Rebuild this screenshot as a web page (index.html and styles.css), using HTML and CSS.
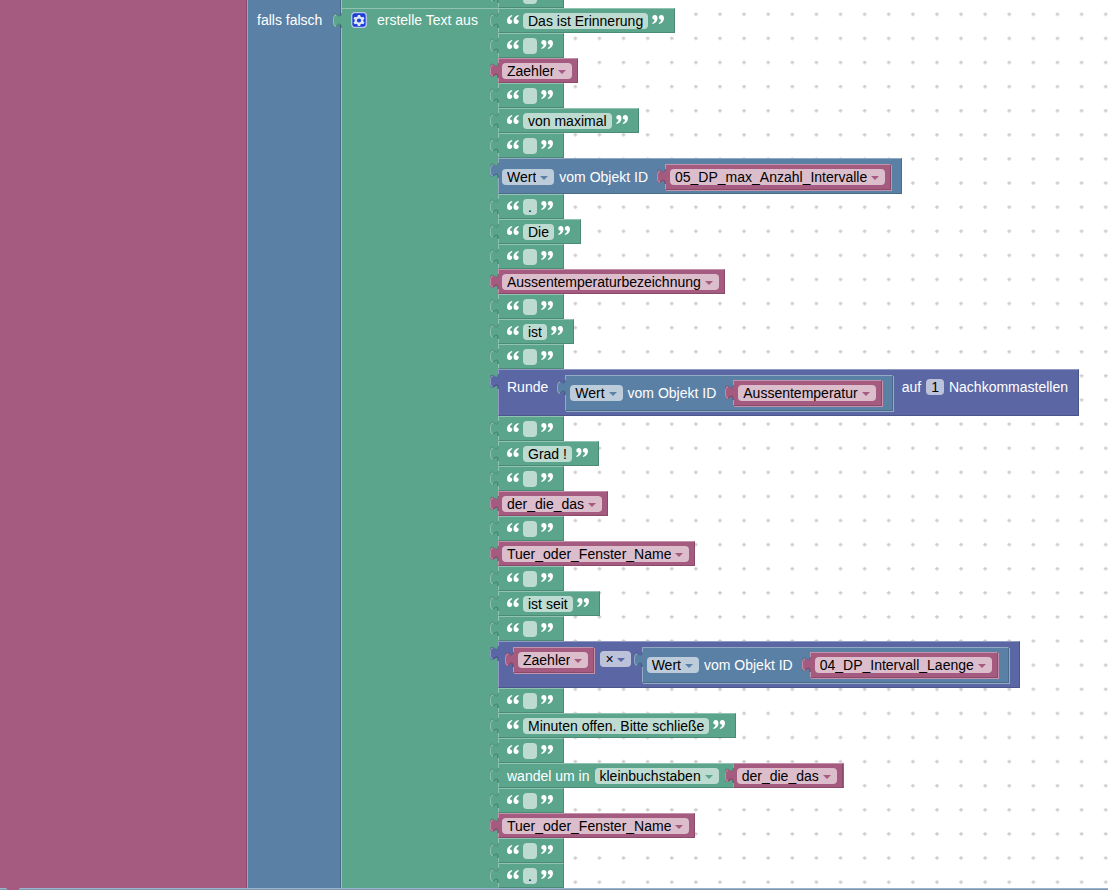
FILE: index.html
```html
<!DOCTYPE html>
<html lang="de">
<head>
<meta charset="utf-8">
<title>Blockly</title>
<link rel="stylesheet" href="styles.css">
</head>
<body>
<svg class="grid" aria-hidden="true">
  <defs>
    <pattern id="dots" width="25" height="25" patternUnits="userSpaceOnUse" patternTransform="translate(562.8 25.9) scale(.9643)">
      <path d="M11 12.900h4M13 10.900v4" stroke="#c4c4c4" stroke-width="1.100"/>
    </pattern>
    <symbol id="ql" viewBox="0 0 12 9"><path d="M5 0C2 .7 0 2.800 0 5.700 0 7.800 1.100 9 2.700 9 4.200 9 5.200 8 5.200 6.600 5.200 5.200 4.200 4.400 3 4.400 2.900 3 3.700 1.800 5.300 1ZM11.500 0C8.500.7 6.500 2.800 6.500 5.700 6.500 7.800 7.600 9 9.200 9 10.700 9 11.700 8 11.700 6.600 11.700 5.200 10.700 4.400 9.500 4.400 9.400 3 10.200 1.800 11.800 1Z" fill="#fff"/></symbol>
    <symbol id="qr" viewBox="0 0 12 9"><use href="#ql" width="12" height="9" transform="rotate(180 6 4.500)"/></symbol>
  </defs>
  <rect width="100%" height="100%" fill="url(#dots)"/>
</svg>

<main class="stack">
  <div class="repeat pink"></div>
  <div class="condition blue"><span class="label">falls falsch</span></div>
  <section class="join green">
    <div class="join-head tab">
      <button class="gear" type="button" aria-label="Einstellungen">
        <svg viewBox="0 0 16 16"><rect x=".7" y=".7" width="14.600" height="14.600" rx="3" fill="#1c3fd8" stroke="#b9c8e6" stroke-width="1.300"/><path d="M6.900 3h2.200l.4 1.600 1.300.7 1.600-.5 1.100 1.900-1.200 1.100v1.500l1.200 1.100-1.100 1.900-1.600-.5-1.300.7-.4 1.500H6.900l-.4-1.500-1.300-.7-1.600.5-1.100-1.900 1.200-1.100V7.800L2.500 6.700l1.100-1.900 1.600.5 1.300-.7Z" fill="#dfe8f4"/><circle cx="8" cy="8.500" r="2.100" fill="#1c3fd8"/></svg>
      </button>
      <span class="label">erstelle Text aus</span>
    </div>
  </section>

  <section class="items">
    <div class="block green tab first"><svg class="q"><use href="#ql"/></svg><input class="chip" aria-label="Text" value=""><svg class="q"><use href="#qr"/></svg></div>
    <div class="block green tab"><svg class="q"><use href="#ql"/></svg><input class="chip" aria-label="Text" value="Das ist Erinnerung"><svg class="q"><use href="#qr"/></svg></div>
    <div class="block green tab"><svg class="q"><use href="#ql"/></svg><input class="chip" aria-label="Text" value=""><svg class="q"><use href="#qr"/></svg></div>
    <div class="block pink tab"><span class="drop"><select class="chip" aria-label="Variable"><option>Zaehler</option></select></span></div>
    <div class="block green tab"><svg class="q"><use href="#ql"/></svg><input class="chip" aria-label="Text" value=""><svg class="q"><use href="#qr"/></svg></div>
    <div class="block green tab"><svg class="q"><use href="#ql"/></svg><input class="chip" aria-label="Text" value="von maximal"><svg class="q"><use href="#qr"/></svg></div>
    <div class="block green tab"><svg class="q"><use href="#ql"/></svg><input class="chip" aria-label="Text" value=""><svg class="q"><use href="#qr"/></svg></div>
    <div class="block blue tab value">
      <span class="drop"><select class="chip" aria-label="Attribut"><option>Wert</option></select></span><span class="label">vom Objekt ID</span>
      <div class="block pink tab inner"><span class="drop"><select class="chip" aria-label="Objekt"><option>05_DP_max_Anzahl_Intervalle</option></select></span></div>
    </div>
    <div class="block green tab"><svg class="q"><use href="#ql"/></svg><input class="chip" aria-label="Text" value="."><svg class="q"><use href="#qr"/></svg></div>
    <div class="block green tab"><svg class="q"><use href="#ql"/></svg><input class="chip" aria-label="Text" value="Die"><svg class="q"><use href="#qr"/></svg></div>
    <div class="block green tab"><svg class="q"><use href="#ql"/></svg><input class="chip" aria-label="Text" value=""><svg class="q"><use href="#qr"/></svg></div>
    <div class="block pink tab"><span class="drop"><select class="chip" aria-label="Variable"><option>Aussentemperaturbezeichnung</option></select></span></div>
    <div class="block green tab"><svg class="q"><use href="#ql"/></svg><input class="chip" aria-label="Text" value=""><svg class="q"><use href="#qr"/></svg></div>
    <div class="block green tab"><svg class="q"><use href="#ql"/></svg><input class="chip" aria-label="Text" value="ist"><svg class="q"><use href="#qr"/></svg></div>
    <div class="block green tab"><svg class="q"><use href="#ql"/></svg><input class="chip" aria-label="Text" value=""><svg class="q"><use href="#qr"/></svg></div>
    <div class="block indigo tab math">
      <span class="label lead">Runde</span>
      <div class="block blue tab value inner">
        <span class="drop"><select class="chip" aria-label="Attribut"><option>Wert</option></select></span><span class="label">vom Objekt ID</span>
        <div class="block pink tab inner"><span class="drop"><select class="chip" aria-label="Objekt"><option>Aussentemperatur</option></select></span></div>
      </div>
      <label class="label digits">auf <input class="chip" value="1"> Nachkommastellen</label>
    </div>
    <div class="block green tab"><svg class="q"><use href="#ql"/></svg><input class="chip" aria-label="Text" value=""><svg class="q"><use href="#qr"/></svg></div>
    <div class="block green tab"><svg class="q"><use href="#ql"/></svg><input class="chip" aria-label="Text" value="Grad !"><svg class="q"><use href="#qr"/></svg></div>
    <div class="block green tab"><svg class="q"><use href="#ql"/></svg><input class="chip" aria-label="Text" value=""><svg class="q"><use href="#qr"/></svg></div>
    <div class="block pink tab"><span class="drop"><select class="chip" aria-label="Variable"><option>der_die_das</option></select></span></div>
    <div class="block green tab"><svg class="q"><use href="#ql"/></svg><input class="chip" aria-label="Text" value=""><svg class="q"><use href="#qr"/></svg></div>
    <div class="block pink tab"><span class="drop"><select class="chip" aria-label="Variable"><option>Tuer_oder_Fenster_Name</option></select></span></div>
    <div class="block green tab"><svg class="q"><use href="#ql"/></svg><input class="chip" aria-label="Text" value=""><svg class="q"><use href="#qr"/></svg></div>
    <div class="block green tab"><svg class="q"><use href="#ql"/></svg><input class="chip" aria-label="Text" value="ist seit"><svg class="q"><use href="#qr"/></svg></div>
    <div class="block green tab"><svg class="q"><use href="#ql"/></svg><input class="chip" aria-label="Text" value=""><svg class="q"><use href="#qr"/></svg></div>
    <div class="block indigo tab math product">
      <div class="block pink tab inner"><span class="drop"><select class="chip" aria-label="Variable"><option>Zaehler</option></select></span></div>
      <span class="drop operator"><select class="chip" aria-label="Operator"><option>×</option></select></span>
      <div class="block blue tab value inner">
        <span class="drop"><select class="chip" aria-label="Attribut"><option>Wert</option></select></span><span class="label">vom Objekt ID</span>
        <div class="block pink tab inner"><span class="drop"><select class="chip" aria-label="Objekt"><option>04_DP_Intervall_Laenge</option></select></span></div>
      </div>
    </div>
    <div class="block green tab"><svg class="q"><use href="#ql"/></svg><input class="chip" aria-label="Text" value=""><svg class="q"><use href="#qr"/></svg></div>
    <div class="block green tab"><svg class="q"><use href="#ql"/></svg><input class="chip" aria-label="Text" value="Minuten offen. Bitte schließe"><svg class="q"><use href="#qr"/></svg></div>
    <div class="block green tab"><svg class="q"><use href="#ql"/></svg><input class="chip" aria-label="Text" value=""><svg class="q"><use href="#qr"/></svg></div>
    <div class="block green tab case">
      <span class="label">wandel um in</span><span class="drop"><select class="chip" aria-label="Schreibweise"><option>kleinbuchstaben</option></select></span>
      <div class="block pink tab"><span class="drop"><select class="chip" aria-label="Variable"><option>der_die_das</option></select></span></div>
    </div>
    <div class="block green tab"><svg class="q"><use href="#ql"/></svg><input class="chip" aria-label="Text" value=""><svg class="q"><use href="#qr"/></svg></div>
    <div class="block pink tab"><span class="drop"><select class="chip" aria-label="Variable"><option>Tuer_oder_Fenster_Name</option></select></span></div>
    <div class="block green tab"><svg class="q"><use href="#ql"/></svg><input class="chip" aria-label="Text" value=""><svg class="q"><use href="#qr"/></svg></div>
    <div class="block green tab"><svg class="q"><use href="#ql"/></svg><input class="chip" aria-label="Text" value="."><svg class="q"><use href="#qr"/></svg></div>
  </section>
</main>
<footer class="next"><svg class="notch" viewBox="0 0 14 2"><path d="M0 0H14L12 2H2Z" fill="#a55b80"/></svg></footer>
</body>
</html>
```
FILE: styles.css
```css
* { box-sizing: border-box; }

body {
  margin: 0;
  overflow: hidden;
  background: #fff;
  color: #fff;
  font: 14px/16px "Liberation Sans", Arial, sans-serif;
}

.grid {
  position: absolute;
  inset: 0;
  z-index: -1;
  width: 100%;
  height: 100%;
}

.green { --c: #5ba58c; --light: #92c3b2; --dark: #4b8a75; }
.pink { --c: #a55b80; --light: #c293ab; --dark: #8a4b6b; }
.blue { --c: #5b80a5; --light: #92abc3; --dark: #4b6b8a; }
.indigo { --c: #5b67a5; --light: #929ac3; --dark: #4b558a; }

.stack { display: flex; }

.repeat {
  flex: none;
  width: 247px;
  background: var(--c);
  border-right: 1px solid var(--dark);
}

.condition {
  flex: none;
  width: 94px;
  padding: 12px 0 0 9px;
  background: var(--c);
  border-left: 1px solid var(--light);
  border-right: 1px solid var(--dark);
}

.join {
  flex: none;
  width: 157px;
  padding-top: 8px;
  background: var(--c);
  border-left: 1px solid var(--light);
}

.join-head {
  position: relative;
  display: flex;
  gap: 10px;
  padding: 3px 0 0 9px;
  border-top: 1px solid var(--light);
}

.gear {
  width: 16px;
  height: 16px;
  padding: 0;
  border: 0;
  background: none;
}

.gear svg { display: block; }

.label { white-space: nowrap; }

.items {
  display: flex;
  flex: 1;
  flex-direction: column;
  align-items: flex-start;
}

.block {
  position: relative;
  display: flex;
  height: 25px;
  padding: 4px 5px 0 3px;
  background: var(--c);
  border: 1px solid;
  border-color: var(--light) var(--dark) var(--dark) var(--light);
}

.first { margin-top: -17px; }

.tab::before,
.tab::after {
  content: "";
  position: absolute;
  left: -9px;
  top: 4px;
  width: 9px;
  height: 15px;
}

.tab::before {
  background: var(--c);
  -webkit-mask: url("data:image/svg+xml,%3Csvg xmlns='http://www.w3.org/2000/svg' viewBox='0 0 9 15'%3E%3Cpath d='M9 15H8C8 5 0 23 0 7.500C0-8 8 10 8 0H9Z'/%3E%3C/svg%3E");
  mask: url("data:image/svg+xml,%3Csvg xmlns='http://www.w3.org/2000/svg' viewBox='0 0 9 15'%3E%3Cpath d='M9 15H8C8 5 0 23 0 7.500C0-8 8 10 8 0H9Z'/%3E%3C/svg%3E");
}

.tab::after {
  background: url("data:image/svg+xml,%3Csvg xmlns='http://www.w3.org/2000/svg' viewBox='0 0 9 15' fill='none'%3E%3Cpath d='M8 0C8 10 0-8 0 7.500' stroke='%23000' stroke-opacity='.12'/%3E%3Cpath d='M3 2C1 2 .5 4 .5 7.500C.5 11 1 13 3 13' stroke='%23fff' stroke-opacity='.35'/%3E%3Cpath d='M3 13C5 12 8 8 8 15' stroke='%23000' stroke-opacity='.25'/%3E%3C/svg%3E");
}

.q {
  flex: none;
  width: 12px;
  height: 9px;
  margin: 2px 4px 0 5px;
}

.q + .chip + .q { margin: 2px 5px 0 4px; }

.chip {
  display: block;
  height: 16px;
  min-width: 14px;
  margin: 0;
  padding: 0 5px;
  border: 0;
  border-radius: 4px;
  background: rgba(255, 255, 255, .6);
  color: #000;
  font: inherit;
  field-sizing: content;
  outline: 0;
}

select.chip {
  appearance: none;
  padding-right: 18px;
}

.drop {
  position: relative;
  flex: none;
}

.drop::after {
  content: "";
  position: absolute;
  right: 6px;
  top: 7px;
  border: 4px solid transparent;
  border-top-color: var(--c);
  border-bottom-width: 0;
  pointer-events: none;
}

.value {
  height: 36px;
  padding: 5px 10px 0 3px;
}

.value > .drop { margin-top: 5px; }

.value > .label { margin: 5px 17px 0 5px; }

.inner {
  height: 26px;
  padding-left: 4px;
  box-shadow: 1px 1px var(--light);
}

.value.inner {
  height: 36px;
  padding-top: 4px;
}

.math {
  height: 47px;
  padding: 5px 10px 0 8px;
}

.math > .label,
.math > .drop { margin-top: 4px; }

.lead { margin-right: 17px; }

.digits {
  display: flex;
  gap: 5px;
  margin-left: 9px;
}

.product { padding-left: 14px; }

.operator { margin: 0 11px 0 6px; }

.operator .chip { padding-right: 17px; }

.case { padding: 4px 0 0 8px; }

.case > .drop { margin: 0 14px 0 5px; }

.case > .block { margin-top: -5px; }

.next {
  height: 2px;
  background: #7e97b2;
  border-top: 1px solid #9db3c9;
}

.notch {
  display: block;
  width: 14px;
  height: 2px;
  margin: -1px 0 0 6px;
}
```
